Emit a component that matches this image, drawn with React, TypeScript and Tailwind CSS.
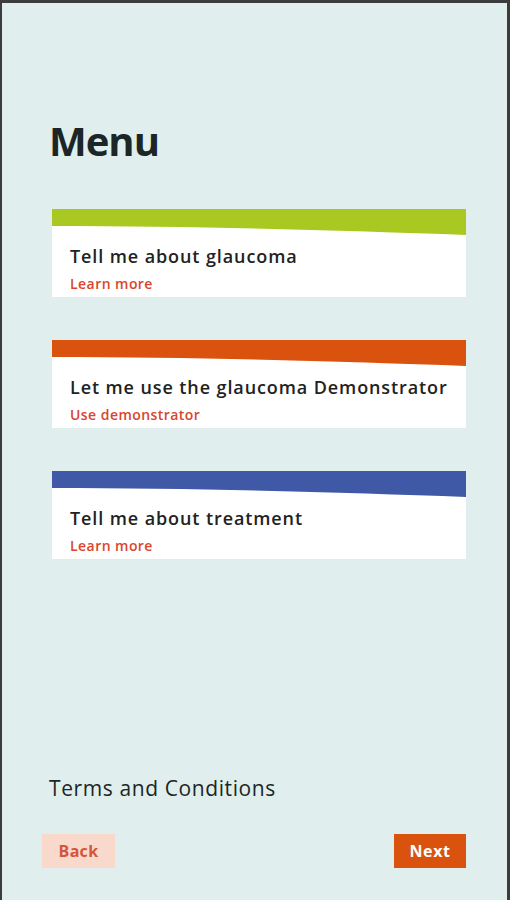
import React from "react";

const font = { fontFamily: '"Open Sans", "Noto Sans", sans-serif' };

function Card({ color, title, link }: { color: string; title: string; link: string }) {
  return (
    <div className="bg-white w-[414px] h-[88px] flex flex-col">
      <svg width="414" height="26" viewBox="0 0 414 26" preserveAspectRatio="none" className="block">
        <path d={`M0 0 H414 V26 C300 22 150 17 0 17 Z`} fill={color} />
      </svg>
      <div className="pl-[18px] pt-[9px]">
        <div className="text-[18px] leading-[24px] font-semibold tracking-[0.9px] text-[#222]">{title}</div>
        <div className="text-[14px] leading-[18px] font-semibold tracking-[0.45px] text-[#d9452c] mt-[7px]">{link}</div>
      </div>
    </div>
  );
}

export default function App() {
  return (
    <div
      style={font}
      className="w-[510px] h-[900px] bg-[#e0efed] border-t-[3px] border-l-2 border-r-[3px] border-[#3c3c3c] flex flex-col"
    >
      <h1 className="pl-[47px] pt-[114px] text-[40px] leading-[48px] font-bold tracking-[-1px] text-[#1c2626]">Menu</h1>
      <div className="pl-[50px] mt-[44px] flex flex-col gap-[43px]">
        <Card color="#a9c922" title="Tell me about glaucoma" link="Learn more" />
        <Card color="#d9520e" title="Let me use the glaucoma Demonstrator" link="Use demonstrator" />
        <Card color="#3f59a6" title="Tell me about treatment" link="Learn more" />
      </div>
      <div className="mt-auto pl-[47px] text-[21px] leading-[28px] font-medium tracking-[0.6px] text-[#1c2626]">
        Terms and Conditions
      </div>
      <div className="mt-[32px] mb-[32px] pl-[40px] pr-[41px] flex justify-between">
        <button className="w-[73px] h-[34px] bg-[#f9d9cb] text-[#d4553a] text-[16px] font-bold tracking-[0.3px]">Back</button>
        <button className="w-[72px] h-[34px] bg-[#d9520e] text-white text-[16px] font-bold tracking-[0.6px]">Next</button>
      </div>
    </div>
  );
}
